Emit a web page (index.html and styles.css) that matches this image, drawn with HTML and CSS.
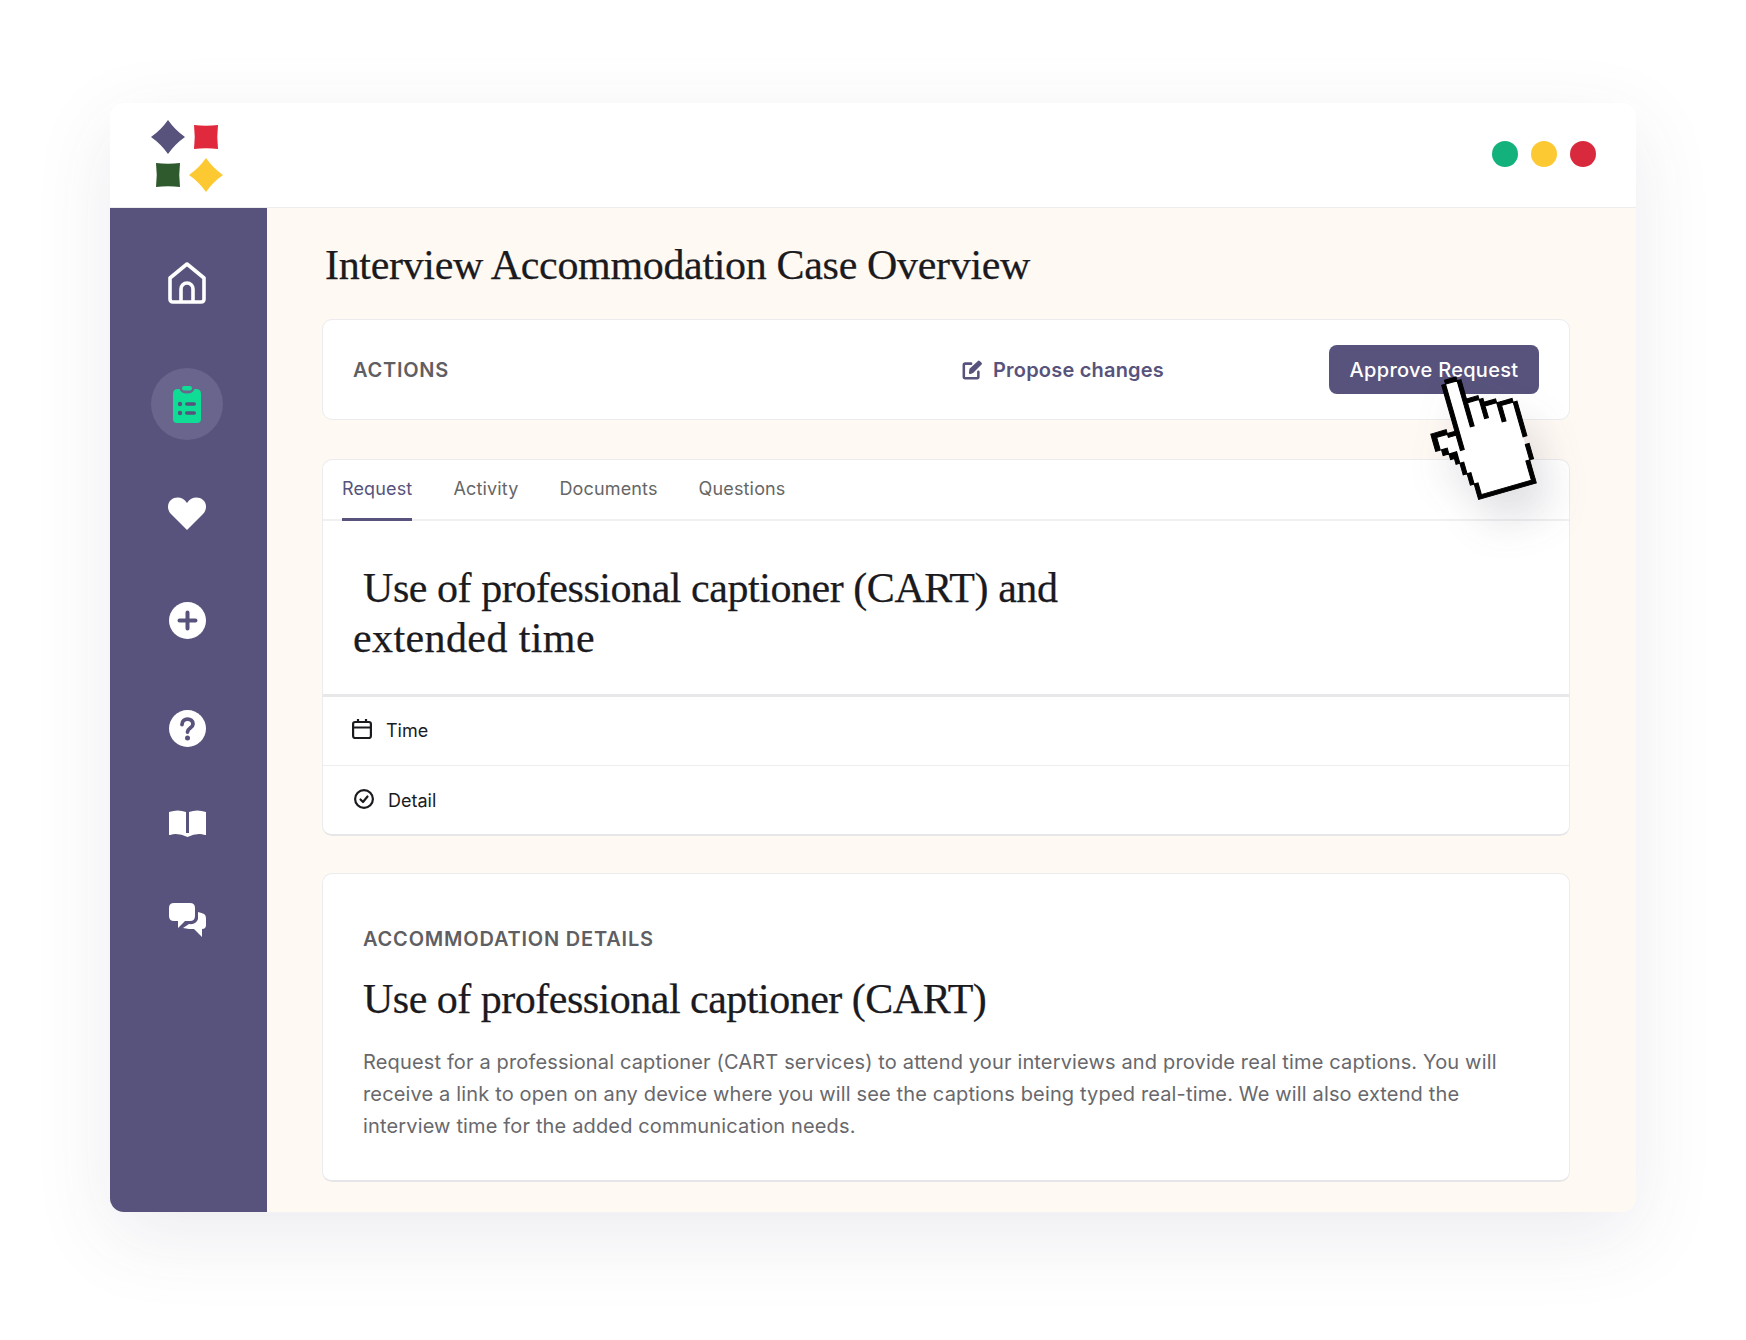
FILE: index.html
```html
<!DOCTYPE html>
<html lang="en">
<head>
  <meta charset="UTF-8">
  <title>Interview Accommodation Case Overview</title>
  <link rel="stylesheet" href="styles.css">
</head>
<body>
  <div class="window">
    <header class="topbar">
      <svg class="logo" viewBox="0 0 74 72">
        <path fill="#57537c" d="M18 0Q25 10 35 17Q25 24 18 34Q11 24 1 17Q11 10 18 0z"/>
        <path fill="#e0293c" d="M44 5Q56 6.500 68 5Q66.500 17 68 29Q56 27.500 44 29Q45.500 17 44 5z"/>
        <path fill="#2f5a2e" d="M6 43Q18 44.500 30 43Q28.500 55 30 67Q18 65.500 6 67Q7.500 55 6 43z"/>
        <path fill="#fdc933" d="M56 38Q63 48 73 55Q63 62 56 72Q49 62 39 55Q49 48 56 38z"/>
      </svg>
      <div class="dots">
        <span class="dot dot-green"></span>
        <span class="dot dot-yellow"></span>
        <span class="dot dot-red"></span>
      </div>
    </header>

    <div class="body">
      <nav class="sidebar">
        <a class="nav-item">
          <svg width="40" height="42" viewBox="0 0 40 42" fill="none" stroke="#fff" stroke-width="3.600" stroke-linejoin="round">
            <path d="M3 16L20 2L37 16V37Q37 40 34 40H6Q3 40 3 37z"/>
            <path d="M14 40V27a6 6 0 0 1 12 0V40"/>
          </svg>
        </a>
        <a class="nav-item nav-item-active">
          <svg width="28" height="37" viewBox="0 0 28 37">
            <rect x="9" y="0" width="10" height="4.500" rx="2.200" fill="#10dd95"/>
            <path fill="#10dd95" d="M5 3H6.500Q8 7.500 14 7.500Q20 7.500 21.500 3H23Q28 3 28 8V33Q28 37 24 37H4Q0 37 0 33V8Q0 3 5 3z"/>
            <circle cx="7" cy="18" r="2.200" fill="#57537c"/>
            <circle cx="7" cy="27" r="2.200" fill="#57537c"/>
            <rect x="12" y="16.200" width="11" height="3.600" rx="1.800" fill="#57537c"/>
            <rect x="12" y="25.200" width="11" height="3.600" rx="1.800" fill="#57537c"/>
          </svg>
        </a>
        <a class="nav-item">
          <svg width="38" height="33" viewBox="0 0 38 33">
            <path fill="#fff" d="M19 33L3 17C-1 13 -1 6 3 3C8 -1 15 0 19 6C23 0 30 -1 35 3C39 6 39 13 35 17z"/>
          </svg>
        </a>
        <a class="nav-item">
          <svg width="37" height="37" viewBox="0 0 37 37">
            <circle cx="18.500" cy="18.500" r="18.500" fill="#fff"/>
            <path d="M18.500 10.500V26.500M10.500 18.500H26.500" stroke="#57537c" stroke-width="4" stroke-linecap="round"/>
          </svg>
        </a>
        <a class="nav-item">
          <svg width="37" height="37" viewBox="0 0 37 37">
            <circle cx="18.500" cy="18.500" r="18.500" fill="#fff"/>
            <path d="M13 14.500C13 7.500 24 7.500 24 14C24 18 18.500 18 18.500 22" fill="none" stroke="#57537c" stroke-width="3.800" stroke-linecap="round"/>
            <circle cx="18.500" cy="28" r="2.500" fill="#57537c"/>
          </svg>
        </a>
        <a class="nav-item">
          <svg width="37" height="27" viewBox="0 0 37 27">
            <path fill="#fff" d="M0 2Q9 -1 17 2V24Q9 22 0 25z"/>
            <path fill="#fff" d="M37 2Q28 -1 20 2V24Q28 22 37 25z"/>
            <path fill="#fff" d="M0 25Q9 22 18.500 27Q28 22 37 25V23H0z"/>
          </svg>
        </a>
        <a class="nav-item">
          <svg width="37" height="34" viewBox="0 0 37 34">
            <path fill="#fff" d="M5 0H21Q26 0 26 5V13Q26 18 21 18H16L9 25V18H5Q0 18 0 13V5Q0 0 5 0z"/>
            <path fill="#fff" d="M29 9Q33 10 35 11Q37 12 37 16V22Q37 26 33 26V34L25 26H20L14 25L20 21Q27 22 29 16z"/>
          </svg>
        </a>
      </nav>

      <main class="content">
        <h1 class="page-title">Interview Accommodation Case Overview</h1>

        <section class="card actions">
          <span class="label">ACTIONS</span>
          <a class="propose">
            <svg width="20" height="20" viewBox="0 0 22 22" fill="none" stroke="#57537c" stroke-width="2.800" stroke-linecap="round" stroke-linejoin="round">
              <path d="M10 4H3.500Q2 4 2 5.500V18.500Q2 20 3.500 20H16.500Q18 20 18 18.500V13"/>
              <path d="M9 14L9.500 10.500L18.500 2L20.500 4L11.500 13z" fill="#57537c"/>
            </svg>
            Propose changes
          </a>
          <button class="approve">Approve Request</button>
        </section>

        <section class="card request">
          <div class="tabs">
            <a class="tab tab-active">Request</a>
            <a class="tab">Activity</a>
            <a class="tab">Documents</a>
            <a class="tab">Questions</a>
          </div>
          <h2 class="request-title"><span class="indent"></span>Use of professional captioner (CART) and<br><span class="request-title-end">extended time</span></h2>
          <div class="row row-first">
            <svg width="20" height="20" viewBox="0 0 20 20" fill="none" stroke="#1b1b1f" stroke-width="2.200">
              <rect x="1.100" y="3" width="17.800" height="16" rx="2"/>
              <path d="M1 8.500H19M6 0V4M14 0V4"/>
            </svg>
            <span>Time</span>
          </div>
          <div class="row row-detail">
            <svg width="20" height="20" viewBox="0 0 20 20" fill="none" stroke="#1b1b1f" stroke-width="2.200" stroke-linecap="round" stroke-linejoin="round">
              <circle cx="10" cy="10" r="8.900"/>
              <path d="M6.500 10.500L9 13L13.500 7.500"/>
            </svg>
            <span>Detail</span>
          </div>
        </section>

        <section class="card details">
          <h3 class="label details-label">ACCOMMODATION DETAILS</h3>
          <h2 class="details-title">Use of professional captioner (CART)</h2>
          <p class="details-text">Request for a professional captioner (CART services) to attend your interviews and provide real time captions. You will receive a link to open on any device where you will see the captions being typed real-time. We will also extend the interview time for the added communication needs.</p>
        </section>
      </main>
    </div>

    <!-- pixel hand over the approve button -->
    <svg class="cursor" width="96" height="124" viewBox="0 0 24 31">
      <g transform="rotate(-16 8.500 30.500)">
        <path fill="#fff" d="M8 1H11V7H15V9H19V10H22L23 11V29L22 30H8V27H7V24H6V21H5V19H4V18H3V17H2V13H5L7 14z"/>
        <path fill="#000" stroke="#000" stroke-width=".25" d="M8 0H11V1H8zM7 1H8V18H7zM11 1H12V13H11zM12 6H15V7H12zM15 7H16V12H15zM15 8H19V9H15zM19 9H20V14H19zM20 9H23V10H20zM23 10H24V19H23zM23 21H24V25H23zM22 25H23V30H22zM8 30H23V31H8zM8 27H9V30H8zM7 24H8V27H7zM6 21H7V24H6zM5 19H6V21H5zM4 18H6V19.500H4zM2.500 16.500H4V18H2.500zM1 13H2.200V16.500H1zM1 12H5V13.200H1zM5 13H7V14H5z"/>
      </g>
    </svg>
  </div>
</body>
</html>
```

FILE: styles.css
```css
* { box-sizing: border-box; }
html { height: 100%; }
body { margin: 0; min-height: 100%; padding: 103px 0 0 110px; background: #fff; font-family: Inter, "Liberation Sans", sans-serif; color: #1b1b1f; }

.window { position: relative; width: 1526px; height: 1109px; border-radius: 14px; background: #fff; box-shadow: 0 24px 80px rgba(70, 70, 110, .1); }

.topbar { display: flex; justify-content: space-between; align-items: center; height: 105px; padding: 1px 40px 0; border-bottom: 1px solid #eeeded; }
.logo { width: 74px; height: 72px; }
.dots { display: flex; gap: 13px; margin-top: -3px; }
.dot { width: 26px; height: 26px; border-radius: 50%; }
.dot-green { background: #13b27c; }
.dot-yellow { background: #fdc933; }
.dot-red { background: #d92a3d; }

.body { display: flex; height: 1004px; }

.sidebar { width: 157px; flex: none; padding: 39px 3px 0 0; background: #57537c; border-bottom-left-radius: 14px; display: grid; grid-template-rows: 121px 109px 107px 108px 95px 97px; justify-items: center; align-content: start; }
.nav-item { display: flex; align-items: center; justify-content: center; width: 72px; height: 72px; border-radius: 50%; }
.nav-item-active { background: #69658c; }

.content { flex: 1; padding: 32px 66px 0 55px; background: #fef9f3; border-bottom-right-radius: 14px; }
.page-title { margin: 0 0 29px 3px; font: 400 42px/50px "Liberation Serif", serif; letter-spacing: -.33px; -webkit-text-stroke: .25px; color: #1b1b1f; }

.card { background: #fff; border: 1px solid #ececee; border-radius: 10px; }
.label { font-size: 20px; font-weight: 600; letter-spacing: .75px; color: #5f5f63; }

.actions { display: flex; align-items: center; height: 101px; padding: 0 30px; margin-bottom: 39px; }
.actions .label { flex: 1; }
.propose { display: flex; align-items: center; gap: 11px; margin-right: 165px; font-size: 20px; font-weight: 600; letter-spacing: .2px; color: #57537c; }
.approve { width: 210px; height: 49px; border: none; border-radius: 8px; background: #57537c; color: #fff; font: 500 20px Inter, sans-serif; letter-spacing: .3px; }

.request { margin-bottom: 37px; border-bottom-width: 2px; border-bottom-color: #e6e6e9; }
.tabs { display: flex; gap: 41px; height: 61px; padding: 0 19px; border-bottom: 2px solid #f0f0f1; }
.tab { display: flex; align-items: center; height: 61px; padding-bottom: 4px; font-size: 18px; letter-spacing: .15px; color: #666; }
.tab-active { color: #57537c; box-shadow: inset 0 -3px #57537c; }

.request-title { margin: 0; padding: 42px 30px 31px; font: 400 42px/50px "Liberation Serif", serif; letter-spacing: -.45px; -webkit-text-stroke: .25px; }
.request-title-end { letter-spacing: .4px; }
.indent { display: inline-block; width: 10px; }

.row { display: flex; align-items: center; gap: 14px; height: 69px; padding: 0 29px; font-size: 18px; border-top: 1px solid #eeeef0; }
.row-first { height: 71px; padding-bottom: 2px; border-top: 3px solid #e8e8ea; }
.row-detail { padding-left: 31px; }
.row svg { margin-top: -3px; }

.details { height: 309px; padding: 51px 40px 0; border-bottom-width: 2px; border-bottom-color: #e6e6e9; }
.details-label { margin: 0; line-height: 28px; letter-spacing: .8px; }
.details-title { margin: 21px 0 0; font: 400 42px/50px "Liberation Serif", serif; letter-spacing: -.5px; -webkit-text-stroke: .25px; }
.details-text { margin: 22px 0 0; font-size: 20px; line-height: 32px; letter-spacing: .15px; color: #68686c; }

.cursor { position: absolute; left: 1336px; top: 272px; overflow: visible; filter: drop-shadow(14px 24px 20px rgba(60, 60, 90, .16)); }
```
